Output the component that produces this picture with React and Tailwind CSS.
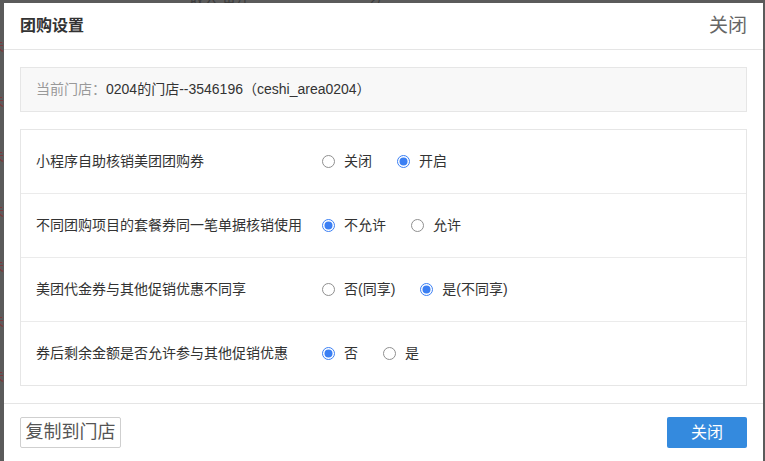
import { useState } from 'react'

const rows = [
  { label: '小程序自助核销美团团购券', options: ['关闭', '开启'], value: 1 },
  { label: '不同团购项目的套餐券同一笔单据核销使用', options: ['不允许', '允许'], value: 0 },
  { label: '美团代金券与其他促销优惠不同享', options: ['否(同享)', '是(不同享)'], value: 1 },
  { label: '券后剩余金额是否允许参与其他促销优惠', options: ['否', '是'], value: 0 },
]

function Radio({ checked }) {
  return (
    <svg width="13" height="13" viewBox="0 0 13 13" className="shrink-0">
      {checked ? (
        <>
          <circle cx="6.5" cy="6.5" r="6" fill="#fff" stroke="#3b7ff3" strokeWidth="1" />
          <circle cx="6.5" cy="6.5" r="4" fill="#3b7ff3" />
        </>
      ) : (
        <circle cx="6.5" cy="6.5" r="6" fill="#fff" stroke="#8f8f8f" strokeWidth="1" />
      )}
    </svg>
  )
}

function SettingRow({ row, first, onPick }) {
  return (
    <div className={`flex items-center pl-[15px] ${first ? 'h-[63px]' : 'h-[64px] border-t border-[#ebebeb]'}`}>
      <div className="w-[286px] text-[14px] text-[#333]">{row.label}</div>
      <div className="flex items-center gap-[25px]">
        {row.options.map((opt, i) => (
          <label key={opt} className="flex items-center gap-[9px] cursor-pointer" onClick={() => onPick(i)}>
            <Radio checked={row.value === i} />
            <span className="text-[14px] text-[#333]">{opt}</span>
          </label>
        ))}
      </div>
    </div>
  )
}

export default function App() {
  const [settings, setSettings] = useState(rows)

  const pick = (ri, oi) => {
    setSettings(s => s.map((r, idx) => (idx === ri ? { ...r, value: oi } : r)))
  }

  return (
    <div
      className="relative h-[461px] w-[765px] overflow-hidden bg-[#5b5b5b]"
      style={{ fontFamily: '"Liberation Sans", "Noto Sans CJK SC", sans-serif' }}
    >
      {/* page behind the overlay */}
      <div className="absolute left-[-10px] top-[36px] flex flex-col gap-[34px] text-[14px] text-[#7a3b3b]">
        <span>未</span>
        <span>未</span>
        <span>未</span>
        <span>未</span>
        <span>未</span>
        <span>未</span>
        <span>未</span>
      </div>
      <div className="absolute left-[190px] top-[-11px] text-[14px] text-[#3a3a3a]">收入 备注</div>
      <div className="absolute left-[370px] top-[-11px] text-[14px] text-[#3a3a3a]">2/</div>

      {/* modal */}
      <div className="absolute left-[4px] top-[3px] w-[759px] h-[470px] bg-white flex flex-col">
        {/* header */}
        <div className="flex items-center justify-between h-[47px] px-4 border-b border-[#e5e5e5]">
          <h1 className="text-[16px] font-bold text-[#333]">团购设置</h1>
          <button className="text-[19px] text-[#666]">关闭</button>
        </div>

        {/* body */}
        <div className="px-4 pt-[17px] pb-[17px] flex flex-col gap-[17px]">
          <div className="h-[45px] flex items-center px-[15px] bg-[#f8f8f8] border border-[#e6e6e6] text-[14px]">
            <span className="text-[#999]">当前门店：</span>
            <span className="text-[#333]">0204的门店--3546196（ceshi_area0204）</span>
          </div>

          <div className="border border-[#e6e6e6]">
            {settings.map((row, i) => (
              <SettingRow key={row.label} row={row} first={i === 0} onPick={oi => pick(i, oi)} />
            ))}
          </div>
        </div>

        {/* footer */}
        <div className="flex items-center justify-between px-4 pt-[13px] border-t border-[#e5e5e5]">
          <button className="h-[31px] w-[101px] border border-[#cfcfcf] rounded-[2px] bg-white text-[18px] text-[#555]">
            复制到门店
          </button>
          <button className="h-[31px] w-[80px] rounded-[2px] bg-[#348ade] text-[16px] text-white">
            关闭
          </button>
        </div>
      </div>
    </div>
  )
}
